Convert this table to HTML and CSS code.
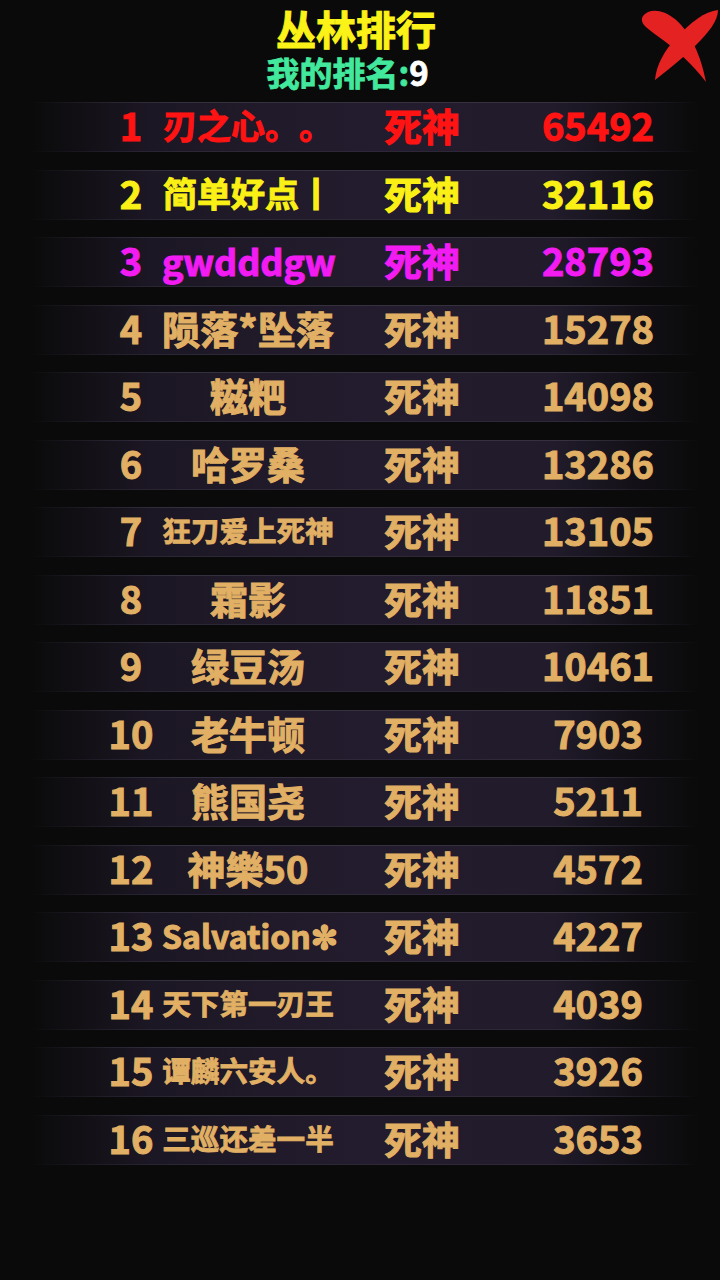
FILE: index.html
```html
<!DOCTYPE html>
<html lang="zh">
<head>
<meta charset="utf-8">
<title>丛林排行</title>
<link rel="stylesheet" href="styles.css">
</head>
<body>
<div class="page">
  <header class="head">
    <div class="title">丛林排行</div>
    <div class="mine">我的排名:<span class="mine-num">9</span></div>
    <button class="close" aria-label="关闭">
      <svg viewBox="640 0 80 90" width="80" height="90">
        <path d="M643,16 C649,8 663,9 675,19 C690,32 701,55 706,82 C693,65 679,52 663,40 C650,30 638,24 643,16 Z" fill="#e42222"/>
        <path d="M718,10 C718,21 708,33 696,45 C683,58 669,69 655,80 C656,65 665,50 676,38 C690,23 705,11 718,10 Z" fill="#e42222"/>
      </svg>
    </button>
  </header>
  <div class="list">
    <div class="row red"><span class="rank">1</span><span class="name fit5">刃之心。。</span><span class="role">死神</span><span class="score">65492</span></div>
    <div class="row yellow"><span class="rank">2</span><span class="name fit5">简单好点丨</span><span class="role">死神</span><span class="score">32116</span></div>
    <div class="row magenta"><span class="rank">3</span><span class="name fitL">gwdddgw</span><span class="role">死神</span><span class="score">28793</span></div>
    <div class="row"><span class="rank">4</span><span class="name">陨落*坠落</span><span class="role">死神</span><span class="score">15278</span></div>
    <div class="row"><span class="rank">5</span><span class="name">糍粑</span><span class="role">死神</span><span class="score">14098</span></div>
    <div class="row"><span class="rank">6</span><span class="name">哈罗桑</span><span class="role">死神</span><span class="score">13286</span></div>
    <div class="row"><span class="rank">7</span><span class="name fit6">狂刀爱上死神</span><span class="role">死神</span><span class="score">13105</span></div>
    <div class="row"><span class="rank">8</span><span class="name">霜影</span><span class="role">死神</span><span class="score">11851</span></div>
    <div class="row"><span class="rank">9</span><span class="name">绿豆汤</span><span class="role">死神</span><span class="score">10461</span></div>
    <div class="row"><span class="rank">10</span><span class="name">老牛顿</span><span class="role">死神</span><span class="score">7903</span></div>
    <div class="row"><span class="rank">11</span><span class="name">熊国尧</span><span class="role">死神</span><span class="score">5211</span></div>
    <div class="row"><span class="rank">12</span><span class="name">神樂50</span><span class="role">死神</span><span class="score">4572</span></div>
    <div class="row"><span class="rank">13</span><span class="name fitS">Salvation✼</span><span class="role">死神</span><span class="score">4227</span></div>
    <div class="row"><span class="rank">14</span><span class="name fit6">天下第一刃王</span><span class="role">死神</span><span class="score">4039</span></div>
    <div class="row"><span class="rank">15</span><span class="name fit6">谭麟六安人。</span><span class="role">死神</span><span class="score">3926</span></div>
    <div class="row"><span class="rank">16</span><span class="name fit6">三巡还差一半</span><span class="role">死神</span><span class="score">3653</span></div>
  </div>
</div>
</body>
</html>
```

FILE: styles.css
```css
* { box-sizing: border-box; }
html, body {
  margin: 0;
  padding: 0;
  background: #0a0a0a;
}
body {
  width: 720px;
  height: 1280px;
  overflow: hidden;
  font-family: "Noto Sans CJK SC", "Noto Sans", sans-serif;
  font-weight: 700;
  text-spacing-trim: space-all;
}
.page {
  position: relative;
  width: 720px;
  height: 1280px;
}
.head {
  display: flex;
  flex-direction: column;
  align-items: center;
  padding-top: 6px;
}
.title {
  font-size: 40px;
  line-height: 44px;
  color: #fbf318;
  padding-right: 8px;
  -webkit-text-stroke: 1px #fbf318;
}
.mine {
  font-size: 33px;
  line-height: 40px;
  margin-top: 2px;
  color: #42e89c;
  padding-right: 25px;
  -webkit-text-stroke: 0.8px #42e89c;
}
.mine-num { color: #ffffff; -webkit-text-stroke: 0.8px #ffffff; }
.close {
  position: absolute;
  top: 0;
  left: 640px;
  width: 80px;
  height: 90px;
  padding: 0;
  border: 0;
  background: none;
}
.close svg { display: block; }
.list {
  margin-top: 10px;
  display: flex;
  flex-direction: column;
  gap: 17.5px;
}
.row {
  margin-left: 30px;
  width: 670px;
  height: 50px;
  padding-left: 70px;
  padding-bottom: 4px;
  display: grid;
  grid-template-columns: 62px 172px 176px 176px;
  align-items: center;
  color: #e1b064;
  -webkit-text-stroke: 1px currentColor;
  font-size: 38px;
  line-height: 44px;
  white-space: nowrap;
  background:
    linear-gradient(to right, rgba(58,52,70,0) 0%, #35303f 22%, #37313f 80%, rgba(58,52,70,0) 100%) top / 100% 1px no-repeat,
    linear-gradient(to right, rgba(58,52,70,0) 0%, #2c2736 22%, #2e2838 80%, rgba(58,52,70,0) 100%) bottom / 100% 1px no-repeat,
    linear-gradient(to right, rgba(32,26,42,0) 0%, #1c1724 18%, #231c2e 50%, #211b2b 78%, rgba(22,19,28,0.6) 92%, rgba(20,18,24,0) 100%);
}
.row > span { text-align: center; }
.row.red { color: #ff1313; }
.row.yellow { color: #fbf016; }
.row.magenta { color: #f21cf2; }
.name.fit5 { font-size: 34px; }
.name.fit6 { font-size: 28.6px; -webkit-text-stroke-width: 0.8px; }
.name.fitL { font-size: 36px; }
.name.fitS { font-size: 32px; }
```
